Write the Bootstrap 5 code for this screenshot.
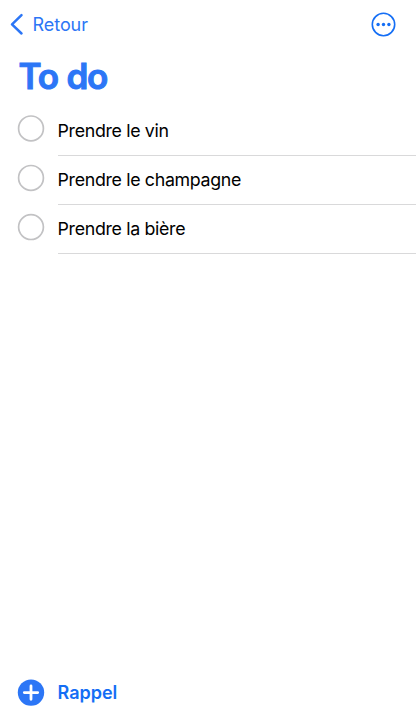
<!DOCTYPE html>
<html lang="fr">
<head>
<meta charset="utf-8">
<meta name="viewport" content="width=device-width, initial-scale=1">
<title>To do</title>
<link href="https://cdn.jsdelivr.net/npm/bootstrap@5.3.0/dist/css/bootstrap.min.css" rel="stylesheet">
<style>
body{font-family:Inter,"Liberation Sans",sans-serif;font-size:18px;line-height:24px;color:#000;background:#fff}
.ios-blue{color:#2c76f6}
.ios-blue-deep{color:#146ef5}
.topbar{height:49px;padding:0 20px 0 10px}
.back-link{font-size:18px;gap:8.5px;letter-spacing:-.05px}
.back-link svg{margin-bottom:1px}
.page-title{font-size:35px;line-height:44px;font-weight:600;letter-spacing:-1.2px;word-spacing:1px;margin:5px 0 8.4px 18.5px;-webkit-text-stroke:1px #2c76f6;stroke-linejoin:round}
.todo{height:49.25px;padding-left:17px}
.todo svg,.add-btn svg{flex:none}
.todo svg{margin-top:8px}
.todo-text{margin-left:12.5px;padding-top:12.6px;border-bottom:1px solid #d9d9da;font-size:17.8px;letter-spacing:-.31px;word-spacing:-.1px}
.add-btn{padding:0 0 10px 17px;gap:12.5px;font-weight:600;letter-spacing:-.02px}
</style>
</head>
<body>
<div class="d-flex flex-column vh-100 overflow-hidden">
  <header class="topbar d-flex align-items-center justify-content-between">
    <a href="#" class="back-link ios-blue d-flex align-items-center text-decoration-none">
      <svg width="14" height="24" viewBox="0 0 14 24" fill="none" stroke="currentColor" stroke-width="2.5" stroke-linecap="round" stroke-linejoin="round"><path d="M11.5 3.1 2 12.3 11.5 21.5"/></svg>
      <span>Retour</span>
    </a>
    <a href="#" class="ios-blue-deep d-flex" aria-label="Options">
      <svg width="25" height="25" viewBox="0 0 25 25"><circle cx="12.5" cy="12.5" r="11.2" fill="none" stroke="currentColor" stroke-width="1.6"/><g fill="currentColor"><circle cx="7.1" cy="12.5" r="1.7"/><circle cx="12.5" cy="12.5" r="1.7"/><circle cx="17.9" cy="12.5" r="1.7"/></g></svg>
    </a>
  </header>
  <h1 class="page-title ios-blue">To do</h1>
  <ul class="list-unstyled mb-0">
    <li class="todo d-flex"><svg width="28" height="28" viewBox="0 0 28 28"><circle cx="14" cy="14.4" r="12.4" fill="none" stroke="#c2c2c4" stroke-width="1.7"/></svg><div class="todo-text flex-grow-1">Prendre le vin</div></li>
    <li class="todo d-flex"><svg width="28" height="28" viewBox="0 0 28 28"><circle cx="14" cy="13.9" r="12.4" fill="none" stroke="#c2c2c4" stroke-width="1.7"/></svg><div class="todo-text flex-grow-1">Prendre le champagne</div></li>
    <li class="todo d-flex"><svg width="28" height="28" viewBox="0 0 28 28"><circle cx="14" cy="14.1" r="12.4" fill="none" stroke="#c2c2c4" stroke-width="1.7"/></svg><div class="todo-text flex-grow-1">Prendre la bière</div></li>
  </ul>
  <a href="#" class="add-btn d-flex align-items-center mt-auto text-decoration-none">
    <svg class="ios-blue" width="28" height="28" viewBox="0 0 28 28"><circle cx="14" cy="13.6" r="13.2" fill="currentColor"/><path d="M14 6.9v13.4M7.3 13.6h13.4" stroke="#fff" stroke-width="2.8" stroke-linecap="round"/></svg>
    <span class="ios-blue-deep">Rappel</span>
  </a>
</div>
<script src="https://cdn.jsdelivr.net/npm/bootstrap@5.3.0/dist/js/bootstrap.bundle.min.js"></script>
</body>
</html>
